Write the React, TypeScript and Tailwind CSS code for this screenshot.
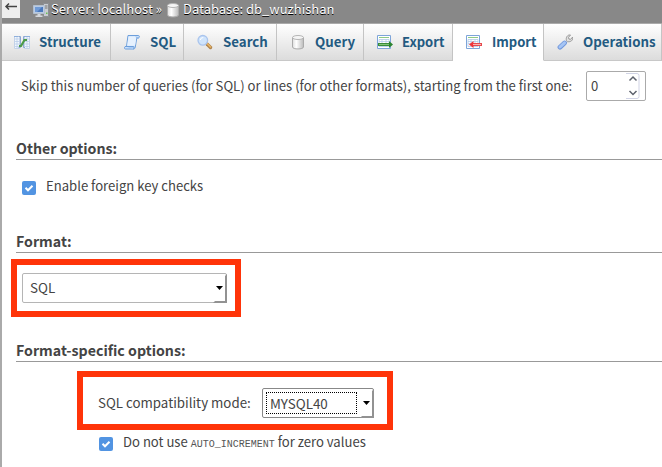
import type { ReactNode } from "react";

const Svg = ({ children, className = "" }: { children: ReactNode; className?: string }) => (
  <svg viewBox="0 0 16 16" className={"h-4 w-4 shrink-0 " + className}>
    {children}
  </svg>
);

const StructureIcon = () => (
  <Svg>
    <path d="M.5 2.500h5v12h-5zM10.500 2.500h5v12h-5z" fill="#f3f7fd" stroke="#c3d2e8" />
    <path d="M1 5h4M1 7.500h4M1 10h4M1 12.500h4M11 5h4M11 7.500h4M11 10h4M11 12.500h4M3 3v11M13 3v11" stroke="#b3c9e6" strokeWidth=".7" />
    <path d="M0 2.500h4M11 2.500h5" stroke="#8fb0dc" />
    <path d="M4.500 2.500h2v11h-2M11 2.500h-1.500v11H11" fill="none" stroke="#8ba8d3" />
    <path d="M5 12h2L10.500 6H13" fill="none" stroke="#4d9c48" strokeWidth="2.200" />
  </Svg>
);

const SqlIcon = () => (
  <Svg>
    <path d="M4 1.500h10.500c1.200 0 1 2.500 0 2.500h-1.700l-1.600 9.500c-.2 1-1 1.500-2 1.500H1.500C0 15 .3 12.500 1.500 12.500h1z" fill="#cfe3fb" stroke="#6c9edb" />
    <path d="M4.500 2.500h8L11 11.800H3.200z" fill="#e6f1fe" />
    <path d="M1 12.500h8.500c1 0 .7 2.500-.5 2.500" fill="#a9cbf5" stroke="#6c9edb" />
    <path d="M12 2.500c.2 1.200.7 1.500 2.500 1.500" fill="none" stroke="#86b2e7" />
  </Svg>
);

const SearchIcon = () => (
  <Svg>
    <path d="M10 10l3.500 3.500" stroke="#b0834c" strokeWidth="3.400" strokeLinecap="round" />
    <path d="M10.300 9.800l3.200 3.200" stroke="#e9b765" strokeWidth="1.500" strokeLinecap="round" />
    <circle cx="5.800" cy="6.300" r="4.800" fill="#cfe4fc" stroke="#a9c4ed" strokeWidth="1.300" />
    <path d="M3.300 6a3 3 0 013-2.500" stroke="#fff" fill="none" />
  </Svg>
);

const DatabaseIcon = ({ className = "" }: { className?: string }) => (
  <Svg className={className}>
    <defs>
      <linearGradient id="metal">
        <stop stopColor="#ddd" />
        <stop offset=".35" stopColor="#fff" />
        <stop offset="1" stopColor="#bbb" />
      </linearGradient>
    </defs>
    <path d="M2.500 3.500v9.500c0 2.600 11 2.600 11 0V3.500" fill="url(#metal)" stroke="#aaa" />
    <ellipse cx="8" cy="3.500" rx="5.500" ry="2" fill="#f5f5f5" stroke="#b5b5b5" />
  </Svg>
);

const TableArrowIcon = ({ incoming = false }: { incoming?: boolean }) => (
  <Svg>
    <path d="M.5 1.500h13v13H.5z" fill="#fff" stroke="#7da4d9" />
    <path d="M2 3.500h10" stroke="#8fca86" />
    <path d="M2 5.500h10v7H2zM2 7.500h10M2 9.500h10M5 5.500v7M9 5.500v7" fill="none" stroke="#b1cae9" strokeWidth=".8" />
    {incoming ? (
      <>
        <path d="M16 10.500H7" stroke="#e5494d" strokeWidth="3" />
        <path d="M7.500 7v7L3 10.500z" fill="#ee343a" />
        <path d="M7 10.500h8" stroke="#ffb0b0" />
      </>
    ) : (
      <>
        <path d="M1 10.500h11" stroke="#3a8c3a" strokeWidth="3" />
        <path d="M12 7v7l4-3.500z" fill="#2c8430" />
        <path d="M2 10.500h10" stroke="#80c576" />
      </>
    )}
  </Svg>
);

const WrenchIcon = () => (
  <Svg>
    <path d="M7.500 8.500l2-2C8.500 3.500 10.500.5 13.500 1l-2 2.300.4 1.700 1.600.4L15.700 3c.7 3.300-2.200 5.300-5 4.600L8.500 9.500z" fill="#e0e0e0" stroke="#999" />
    <path d="M3 13.200l4.500-4.200" stroke="#7298dc" strokeWidth="4.800" strokeLinecap="round" />
    <path d="M3 13l4.500-4.200" stroke="#a6c5f4" strokeWidth="3" strokeLinecap="round" />
  </Svg>
);

const ServerIcon = () => (
  <Svg>
    <path d="M10.500 1.500h5v13h-5z" fill="#c9ccd0" stroke="#8b8e92" />
    <path d="M12 4h2.500M12 6h2.500" stroke="#777" />
    <path d="M13 10.500h1.500V12H13z" fill="#66c354" />
    <path d="M.5 3.500h11v8H.5z" fill="#b9cbe3" stroke="#b3bfce" />
    <path d="M2 5h8v5H2z" fill="#4a79bd" />
    <path d="M2 5h7L4 10H2z" fill="#6f9ad6" />
    <path d="M4.500 12h3v1.500h-3zM2.500 13.500h7V15h-7z" fill="#d5d8dc" />
  </Svg>
);

type TabProps = { icon: ReactNode; label: string; width: string; active?: boolean; pad?: string; gap?: string; text?: string };

const Tab = ({ icon, label, width, active, pad = "pl-[13px]", gap = "gap-[10px]", text = "text-[13.3px]" }: TabProps) => (
  <div
    className={`flex h-[37px] shrink-0 items-center border-r border-r-[#c4c4c4] border-b leading-5 font-bold text-[#235a81] ${text} ${width} ${pad} ${gap} ${
      active ? "border-b-white bg-white" : "border-b-[#c8c8c8] bg-gradient-to-b from-white to-[#dcdcdc]"
    }`}
  >
    {icon}
    <span className="mb-px whitespace-nowrap">{label}</span>
  </div>
);

const Check = () => (
  <span className="flex h-[14px] w-[14px] shrink-0 items-center justify-center rounded-[2px] bg-[#5294e2]">
    <svg viewBox="0 0 14 14" className="h-[14px] w-[14px]">
      <path d="M3.500 6.800l2.500 2.500 4.500-4.500" fill="none" stroke="#fff" strokeWidth="2" />
    </svg>
  </span>
);

const Select = ({ label, className, focused }: { label: string; className: string; focused?: boolean }) => (
  <div className={`relative flex h-[30px] shrink-0 items-center rounded-[2px] border bg-white text-[13.4px] ${className}`}>
    {focused ? (
      <span className="ml-[3px] flex h-[22px] w-[91px] items-center border border-dotted border-black pl-[3px] leading-[18px]">
        <span className="mb-px">{label}</span>
      </span>
    ) : (
      <span className="mb-[2px] ml-[7px] leading-5">{label}</span>
    )}
    <svg viewBox="0 0 14 30" className="absolute -top-px -right-px h-[30px] w-[14px]">
      <path d="M3 13h7l-3.500 4z" fill="#000" />
      <path d="M0 30l2-2h10V3l2-2v29z" fill="#929292" />
    </svg>
  </div>
);

const Heading = ({ children }: { children: ReactNode }) => (
  <h2 className="ml-[14px] h-[23px] border-b border-[#999] text-[14.2px] leading-[22px] font-bold text-[#444]">{children}</h2>
);

export default function App() {
  return (
    <div className="h-[467px] w-[662px] overflow-hidden border-l-2 border-[#aaa] bg-white font-['Noto_Sans_CJK_SC',sans-serif] text-[13.1px] leading-5 text-[#444]">
      <header className="flex h-[23px] items-start bg-[#888] text-white">
        <span className="h-[18px] w-[18px] bg-[#eee]">
          <svg viewBox="0 0 18 18" className="h-[18px] w-[18px]">
            <path d="M4 6.500h11M7 3.500l-3 3 3 3" fill="none" stroke="#444" strokeWidth="1.500" />
          </svg>
        </span>
        <div className="ml-[13px] flex h-[19px] items-center text-[13px] leading-[19px] whitespace-nowrap [text-shadow:0_1px_0_#000]">
          <ServerIcon />
          <span className="mb-[2px] ml-[2px] w-[114px]">Server: localhost »</span>
          <DatabaseIcon />
          <span className="mb-[2px] ml-[2px]">Database: db_wuzhishan</span>
        </div>
      </header>
      <nav className="flex h-[38px] overflow-hidden border-t border-[#aaa]">
        <Tab icon={<StructureIcon />} label="Structure" width="w-[109px]" pad="pl-3" gap="gap-[9px]" />
        <Tab icon={<SqlIcon />} label="SQL" width="w-[73px]" />
        <Tab icon={<SearchIcon />} label="Search" width="w-[93px]" />
        <Tab icon={<DatabaseIcon />} label="Query" width="w-[87px]" gap="gap-[9px]" />
        <Tab icon={<TableArrowIcon />} label="Export" width="w-[89px]" gap="gap-[9px]" text="text-[13px]" />
        <Tab icon={<TableArrowIcon incoming />} label="Import" width="w-[91px]" active text="text-[13px]" />
        <Tab icon={<WrenchIcon />} label="Operations" width="w-[118px]" />
      </nav>
      <main>
        <div className="mt-[10px] flex h-[30px] items-center pl-[19px]">
          <span className="w-[565px] whitespace-nowrap">
            Skip this number of queries (for SQL) or lines (for other formats), starting from the first one:
          </span>
          <span className="flex h-[30px] w-[60px] shrink-0 items-center justify-between rounded-[2px] border border-[#aaa] pr-[5px] pl-1">
            0
            <svg viewBox="0 0 14 26" className="h-[26px] w-[14px]">
              <path d="M0 .5h11q2 0 2 2v21q0 2-2 2H0" fill="none" stroke="#d0d3e5" />
              <path d="M3.500 7.500L7 4l3.500 3.500M3.500 18L7 21.500l3.500-3.500" fill="none" stroke="#5c616c" strokeWidth="1.500" />
            </svg>
          </span>
        </div>
        <section className="mt-9">
          <Heading>Other options:</Heading>
          <div className="mt-[18px] flex h-5 items-center gap-[10px] pl-5">
            <Check />
            <span className="mb-1">Enable foreign key checks</span>
          </div>
        </section>
        <section className="mt-8">
          <Heading>Format:</Heading>
          <div className="mt-[6px] ml-[9px] flex h-[58px] w-[230px] items-center border-[6px] border-[#ff3409] pl-[5px]">
            <Select label="SQL" className="w-[205px] border-[#b5b5b5]" />
          </div>
        </section>
        <section className="mt-[22px]">
          <Heading>Format-specific options:</Heading>
          <div className="mt-[9px] ml-[75px] flex h-[59px] w-[316px] items-center border-[6px] border-[#ff3409] pt-[5px] pl-[15px]">
            <span className="w-[164px] text-[13.3px] whitespace-nowrap">SQL compatibility mode:</span>
            <Select label="MYSQL40" className="w-[112px] border-[#888]" focused />
          </div>
          <div className="mt-1 flex h-5 items-center gap-[10px] pl-[97px]">
            <Check />
            <span className="mb-px whitespace-nowrap">
              Do not use <code className="font-['Liberation_Mono',monospace] text-[10px] text-[#555]">AUTO_INCREMENT</code> for zero values
            </span>
          </div>
        </section>
      </main>
    </div>
  );
}
